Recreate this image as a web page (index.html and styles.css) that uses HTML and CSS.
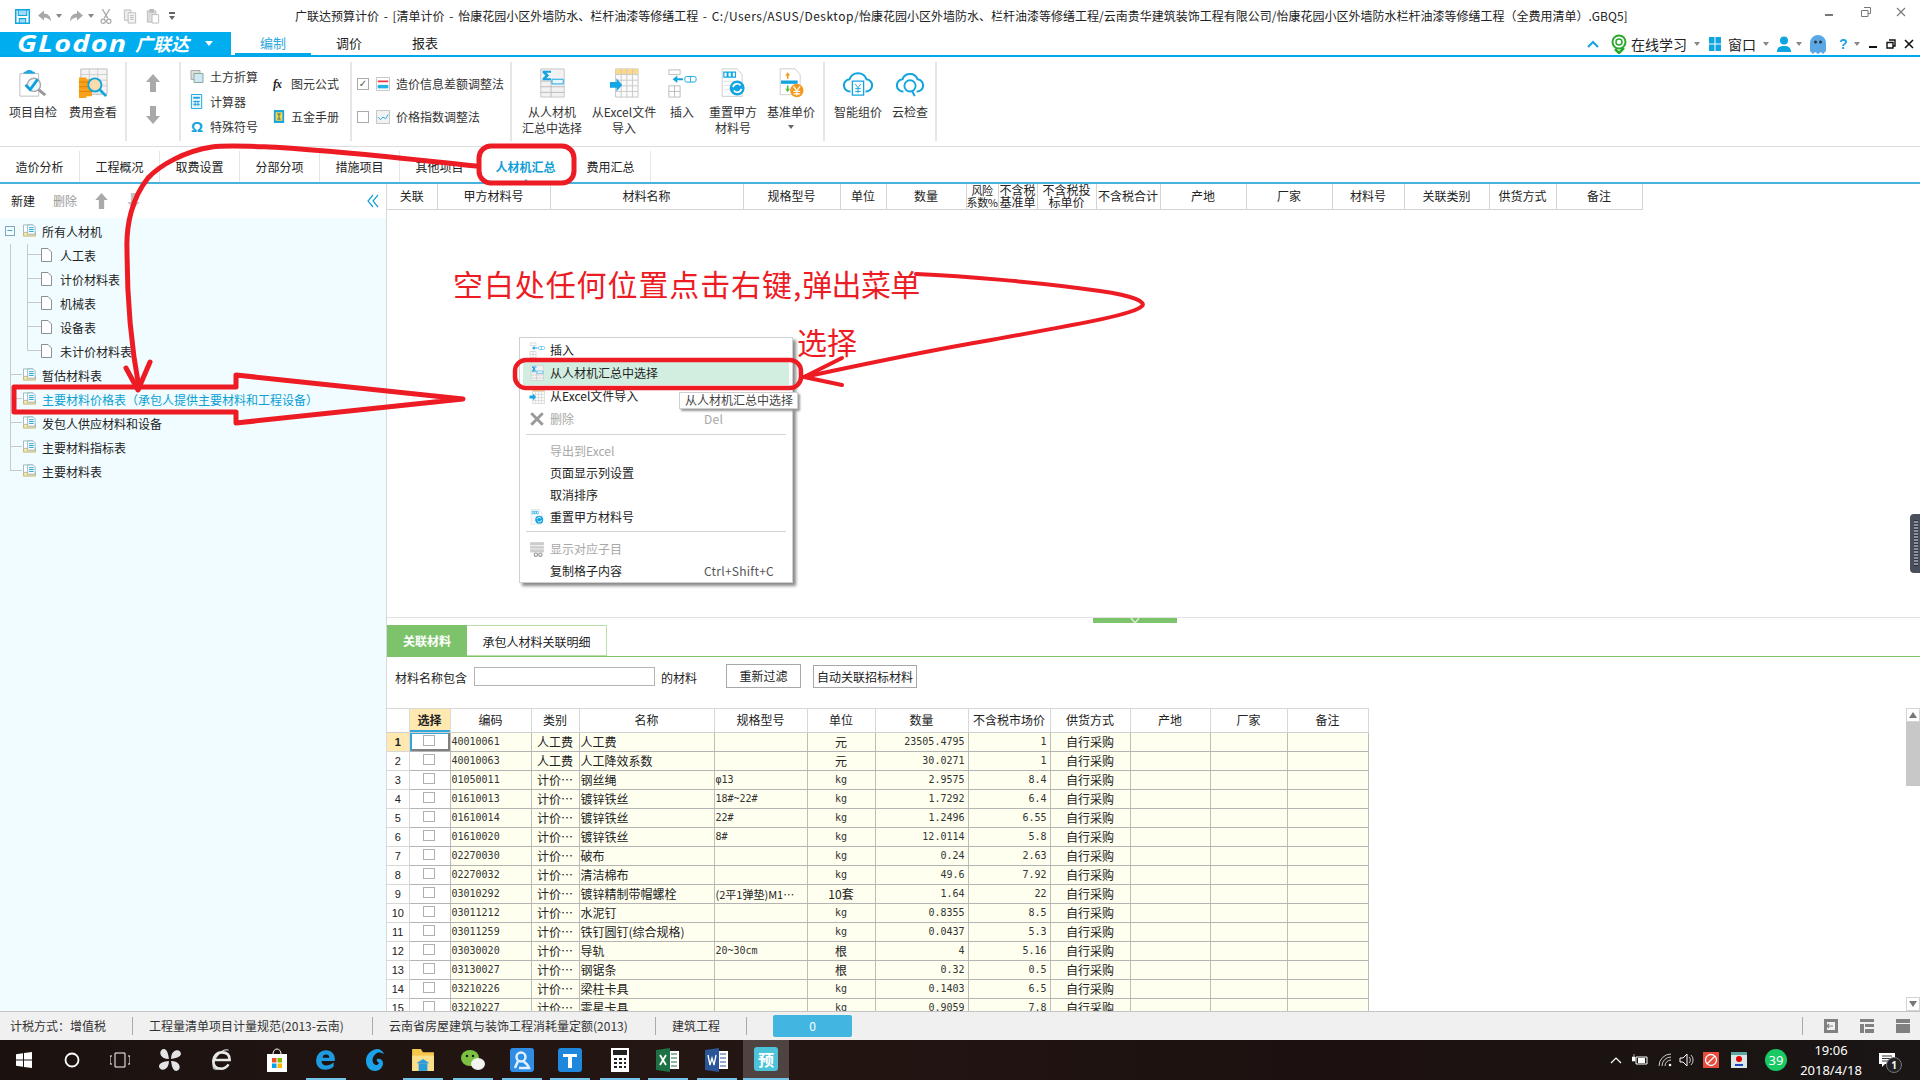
FILE: index.html
```html
<!DOCTYPE html>
<html lang="zh-CN">
<head>
<meta charset="utf-8">
<title>广联达预算计价</title>
<link rel="stylesheet" href="styles.css">
</head>
<body>
<svg class="defs" width="0" height="0" aria-hidden="true">
  <symbol id="i-check" viewBox="0 0 32 32">
    <path d="M2 6h20v24H2z" fill="#fff" stroke="#bbb"/><path d="M8 5a4 3 0 0 1 8 0z" fill="#1ba7e0"/><path d="M6 4h12v2H6z" fill="#1ba7e0"/>
    <circle cx="17" cy="18" r="7" fill="#eef7fb" stroke="#aaa" stroke-width="1.5"/><path d="M22 23l7 6" stroke="#999" stroke-width="3"/>
    <path d="M8 18l5 5 8-11" fill="none" stroke="#0aa0dc" stroke-width="3"/>
  </symbol>
  <symbol id="i-cost" viewBox="0 0 32 32">
    <path d="M3 1h28v27H3z" fill="#f4f4f4" stroke="#bbb"/><path d="M3 7h28M3 13h28M3 19h28M12 1v27M21 1v27" stroke="#ccc"/>
    <path d="M1 10h8v22H1zM8 12h7v18H8z" fill="#f9a11b"/><path d="M1 15h14M1 20h14M1 25h14" stroke="#e07f00"/>
    <circle cx="18" cy="18" r="7" fill="#f8dcae" stroke="#11a5dc" stroke-width="2"/><path d="M23 23l7 7" stroke="#11a5dc" stroke-width="3"/>
  </symbol>
  <symbol id="i-sum" viewBox="0 0 30 32">
    <path d="M3 1h25v30H3z" fill="#f2f2f2" stroke="#c4c4c4"/><path d="M3 14h25M3 20h25M3 26h25M14 14v17" stroke="#bbb"/>
    <path d="M5 3h9v2H9l3 3-3 3h5v2H5v-2l3-3-3-3z" fill="#14a3df"/><path d="M15 12h12v5H15z" fill="#e9f6fc" stroke="#14a3df"/>
  </symbol>
  <symbol id="i-excel" viewBox="0 0 32 32">
    <path d="M7 1h24v30H7z" fill="#fbfbfb" stroke="#c4c4c4"/><path d="M7 1h24v6H7z" fill="#fbd98a"/><path d="M7 7h24M7 13h24M7 19h24M7 25h24M13 1v30M19 1v30M25 1v30" stroke="#c9c9c9"/>
    <path d="M1 15h7v-4l6 7-6 7v-4H1z" fill="#12a5e3"/>
  </symbol>
  <symbol id="i-insert" viewBox="0 0 32 32">
    <path d="M2 2h12v5H2zM2 19h12v12H2z" fill="#fff" stroke="#bbb"/><path d="M2 25h12M8 19v12" stroke="#bbb"/>
    <path d="M6 12l5-4v3h6v2h-6v3z" fill="#12a5e3"/><rect x="19" y="9" width="12" height="6" rx="2" fill="#fff" stroke="#12a5e3"/><path d="M25 9v6" stroke="#12a5e3"/>
  </symbol>
  <symbol id="i-reset" viewBox="0 0 32 36">
    <path d="M3 1h18l6 7v26H3z" fill="#fff" stroke="#c4c4c4"/><path d="M5 5h4v6H5zM10 5h4v6h-4zM15 5h4v6h-4z" fill="#fff" stroke="#12a5e3" stroke-width="1.4"/><path d="M5 16h12M5 21h8M5 26h8" stroke="#ddd"/>
    <circle cx="21" cy="24" r="9" fill="#12a5e3"/><path d="M16 23a5 5 0 0 1 9-2M26 25a5 5 0 0 1-9 2" fill="none" stroke="#fff" stroke-width="2"/>
  </symbol>
  <symbol id="i-base" viewBox="0 0 32 36">
    <path d="M3 1h18l6 7v24H3z" fill="#fff" stroke="#c4c4c4"/><path d="M9 9l3-4 3 4h-2v4h-2V9z" fill="#f39a1e"/><path d="M4 15h20v4H4z" fill="#14a3df"/><path d="M11 21h2v4h2l-3 4-3-4h2z" fill="#5db84a"/>
    <circle cx="23" cy="27" r="8" fill="#f39a1e"/><path d="M19 22l4 5 4-5M23 27v6M19 28h8M19 31h8" fill="none" stroke="#fff" stroke-width="1.4"/>
  </symbol>
  <symbol id="i-cloudy" viewBox="0 0 32 32">
    <path d="M8 25a6.5 6.5 0 0 1-1-13 9.5 9.5 0 0 1 18 0 6.5 6.5 0 0 1-1 13" fill="none" stroke="#13a4df" stroke-width="2.2"/>
    <path d="M10 14h12v15H10z" fill="#fff" stroke="#13a4df" stroke-width="1.4"/><path d="M13 17l3 4 3-4M16 21v6M13 22h6M13 25h6" fill="none" stroke="#13a4df"/>
  </symbol>
  <symbol id="i-cloudq" viewBox="0 0 32 32">
    <path d="M9 25a6.5 6.5 0 0 1-1-13 8.5 8.5 0 0 1 16 0 6.5 6.5 0 0 1-1 13" fill="none" stroke="#13a4df" stroke-width="2.2"/>
    <circle cx="16" cy="19" r="6" fill="#fff" stroke="#13a4df" stroke-width="2"/><path d="M18 24l3 6" stroke="#13a4df" stroke-width="2.2"/>
  </symbol>
  <symbol id="i-folder" viewBox="0 0 14 14">
    <path d="M.5 1h10v11H.5z" fill="#fff" stroke="#9cb3b8"/><path d="M.5 9h13v4H.5z" fill="#f5e6ac" stroke="#c3b477"/><path d="M5 1h6l2 2v8H5z" fill="#fff" stroke="#8fb4bf"/><path d="M6.500 4h5M6.500 6h5M6.500 8h5" stroke="#14a3df"/>
  </symbol>
  <symbol id="i-page" viewBox="0 0 11 14"><path d="M.5.5h6.500l3.500 3.500v9.500H.5z" fill="#fff" stroke="#8a9093"/></symbol>
  <symbol id="i-up" viewBox="0 0 14 18"><path d="M7 0l7 8H10v10H4V8H0z" fill="#a9a9a9"/></symbol>
  <symbol id="i-down" viewBox="0 0 14 18"><path d="M7 18l7-8H10V0H4v10H0z" fill="#a9a9a9"/></symbol>
  <symbol id="i-win" viewBox="0 0 16 16"><path d="M0 2.200l7-1v6.300H0zM8 1l8-1v7.500H8zM0 8.500h7v6.300l-7-1zM8 8.500h8V16l-8-1z" fill="#fff"/></symbol>
</svg>

<div class="app">
  <header class="titlebar">
    <div class="qat">
      <svg class="q q-save" viewBox="0 0 14 14"><path d="M.7.7h12.600v12.600H.7z" fill="#fff" stroke="#0ea5e0" stroke-width="1.4"/><path d="M3 1h8v5H3zM4 9h6v4H4z" fill="#9edcf5" stroke="#0ea5e0"/></svg>
      <svg class="q q-undo" viewBox="0 0 14 14"><path d="M6 1L0 6l6 5V8c3 0 5 1 7 4 0-5-3-8-7-8z" fill="#a8a8a8"/></svg>
      <span class="caret-gray q-c1"></span>
      <svg class="q q-redo" viewBox="0 0 14 14"><path d="M8 1l6 5-6 5V8c-3 0-5 1-7 4 0-5 3-8 7-8z" fill="#a8a8a8"/></svg>
      <span class="caret-gray q-c2"></span>
      <svg class="q q-cut" viewBox="0 0 14 16"><path d="M3 0l6 10M11 0L5 10" stroke="#aaa" stroke-width="1.4"/><circle cx="4" cy="13" r="2.300" fill="none" stroke="#aaa" stroke-width="1.300"/><circle cx="10" cy="13" r="2.300" fill="none" stroke="#aaa" stroke-width="1.300"/></svg>
      <svg class="q q-copy" viewBox="0 0 14 16"><path d="M1 1h7v11H1z" fill="#eee" stroke="#bbb"/><path d="M5 4h8v11H5z" fill="#f4f4f4" stroke="#bbb"/><path d="M7 7h4M7 9h4M7 11h4" stroke="#bbb"/></svg>
      <svg class="q q-paste" viewBox="0 0 14 16"><path d="M1 2h9v12H1z" fill="#ddd" stroke="#bbb"/><path d="M3 0h5v4H3z" fill="#bbb"/><path d="M6 6h7v9H6z" fill="#fff" stroke="#bbb"/></svg>
      <svg class="q-menu" viewBox="0 0 6 8"><path d="M0 0h6v2H0zM0 4h6L3 8z" fill="#666"/></svg>
    </div>
    <div class="title-text">广联达预算计价 - [清单计价 - 怡康花园小区外墙防水、栏杆油漆等修缮工程 - <span class="lat">C:/Users/ASUS/Desktop/</span>怡康花园小区外墙防水、栏杆油漆等修缮工程/云南贵华建筑装饰工程有限公司/怡康花园小区外墙防水栏杆油漆等修缮工程（全费用清单）.GBQ5]</div>
    <div class="winctl">
      <span class="wc-min"></span>
      <svg class="wc-res" viewBox="0 0 10 10"><path d="M3 .5h6.500v6H7M.5 3.500H7v6H.5z" fill="#fff" stroke="#777"/></svg>
      <svg class="wc-x" viewBox="0 0 10 10"><path d="M1 1l8 8M9 1l-8 8" stroke="#777" stroke-width="1.100"/></svg>
    </div>
  </header>

  <nav class="menubar">
    <div class="logo"><span class="logo-en"><span class="logo-stretch">GLodon</span></span><span class="logo-cn">广联达</span><span class="caret-white"></span></div>
    <a class="mtab active">编制</a><a class="mtab">调价</a><a class="mtab">报表</a>
    <div class="mright">
      <svg class="m-upc" viewBox="0 0 12 8"><path d="M1 7l5-5 5 5" fill="none" stroke="#1aa7e0" stroke-width="2.200"/></svg>
      <svg class="m-learn" viewBox="0 0 16 20"><circle cx="8" cy="8" r="6.500" fill="none" stroke="#2aa82a" stroke-width="2"/><circle cx="8" cy="8" r="3" fill="#fff" stroke="#2aa82a" stroke-width="1.500"/><path d="M4 15l4 4 5-5" fill="none" stroke="#2aa82a" stroke-width="2.500"/></svg>
      <span class="m-learn-text">在线学习</span>
      <span class="caret-gray m-c1"></span>
      <svg class="m-grid" viewBox="0 0 12 14"><path d="M0 0h5.500v6.500H0zM6.500 0H12v6.500H6.500zM0 7.500h5.500V14H0zM6.500 7.500H12V14H6.500z" fill="#0ea5e0"/></svg>
      <span class="m-win-text">窗口</span>
      <span class="caret-gray m-c2"></span>
      <svg class="m-user" viewBox="0 0 14 16"><circle cx="7" cy="4.500" r="4" fill="#0ea5e0"/><path d="M0 16c0-5 3-6 7-6s7 1 7 6z" fill="#0ea5e0"/></svg>
      <span class="caret-gray m-c3"></span>
      <svg class="m-ghost" viewBox="0 0 16 20"><path d="M0 9a8 8 0 0 1 16 0v8l-3 3-2-2-3 2-3-2-2 2-3-3z" fill="#5aa9e6"/><circle cx="5.500" cy="8" r="1.500" fill="#333"/><circle cx="10.500" cy="8" r="1.500" fill="#333"/></svg>
      <span class="m-help">?</span>
      <span class="caret-gray m-c4"></span>
      <span class="m-min"></span>
      <svg class="m-res" viewBox="0 0 10 10"><path d="M3 1h6v6H7M1 3.500h6v5.500H1z" fill="#fff" stroke="#111" stroke-width="1.400"/></svg>
      <svg class="m-x" viewBox="0 0 10 10"><path d="M1 1l8 8M9 1l-8 8" stroke="#111" stroke-width="1.600"/></svg>
    </div>
  </nav>

  <section class="ribbon">
    <div class="rgroup g1">
      <div class="rbtn w60"><svg class="ric"><use href="#i-check"/></svg><span>项目自检</span></div>
      <div class="rbtn w60"><svg class="ric"><use href="#i-cost"/></svg><span>费用查看</span></div>
    </div>
    <div class="rgroup g2">
      <svg class="arrow-b"><use href="#i-up"/></svg>
      <svg class="arrow-b"><use href="#i-down"/></svg>
    </div>
    <div class="rgroup g3">
      <div class="smallcol three">
        <div class="srow"><svg class="sic" viewBox="0 0 14 14"><path d="M1 1h9v9H1z" fill="#ddd" stroke="#aaa"/><path d="M4 4h9v9H4z" fill="#cfe8f5" stroke="#8a9"/></svg>土方折算</div>
        <div class="srow"><svg class="sic" viewBox="0 0 14 16"><path d="M1 .5h11v15H1z" fill="#e8f6fd" stroke="#14a3df"/><path d="M3 3h7v2H3z" fill="#14a3df"/><path d="M3 8h7M3 11h7M5 7v6M8 7v6" stroke="#14a3df"/></svg>计算器</div>
        <div class="srow"><span class="omega">Ω</span>特殊符号</div>
      </div>
      <div class="smallcol two">
        <div class="srow"><span class="fx"><i>f</i><i>x</i></span>图元公式</div>
        <div class="srow"><svg class="sic12" viewBox="0 0 14 16"><path d="M1 .5h12v15H1z" fill="#14a3df"/><path d="M3 3h8v10H3z" fill="#f9d648"/><path d="M5 5h4M7 5v6M5 11h4" stroke="#14638a"/></svg>五金手册</div>
      </div>
    </div>
    <div class="rgroup g4">
      <div class="smallcol two">
        <div class="srow"><span class="cb checked">✓</span><svg class="sic2" viewBox="0 0 16 16"><path d="M.5.5h15v15H.5z" fill="#fff" stroke="#bbb"/><path d="M2 4h12v2H2z" fill="#e63946"/><path d="M2 9h12v4H2z" fill="#21b0e8"/></svg>造价信息差额调整法</div>
        <div class="srow"><span class="cb"></span><svg class="sic2" viewBox="0 0 16 16"><path d="M.5.5h15v15H.5z" fill="#f2f2f2" stroke="#bbb"/><path d="M2 8l3 3 3-3 3 2 3-5" fill="none" stroke="#14a3df"/></svg>价格指数调整法</div>
      </div>
    </div>
    <div class="rgroup g5">
      <div class="rbtn w80"><svg class="ric"><use href="#i-sum"/></svg><span>从人材机<br>汇总中选择</span></div>
      <div class="rbtn w64"><svg class="ric"><use href="#i-excel"/></svg><span>从Excel文件<br>导入</span></div>
      <div class="rbtn w52"><svg class="ric"><use href="#i-insert"/></svg><span>插入</span></div>
      <div class="rbtn w50"><svg class="ric"><use href="#i-reset"/></svg><span>重置甲方<br>材料号</span></div>
      <div class="rbtn w66"><svg class="ric"><use href="#i-base"/></svg><span>基准单价</span><span class="caret-small"></span></div>
    </div>
    <div class="rgroup g6">
      <div class="rbtn w52"><svg class="ric"><use href="#i-cloudy"/></svg><span>智能组价</span></div>
      <div class="rbtn w52"><svg class="ric"><use href="#i-cloudq"/></svg><span>云检查</span></div>
    </div>
  </section>

  <nav class="tabs">
    <a class="tab">造价分析</a><a class="tab">工程概况</a><a class="tab">取费设置</a><a class="tab">分部分项</a><a class="tab">措施项目</a><a class="tab">其他项目</a><a class="tab wide active">人材机汇总</a><a class="tab">费用汇总</a>
  </nav>

  <main class="main">
    <aside class="side">
      <div class="side-tools">
        <span class="st-new">新建</span><span class="st-del">删除</span>
        <svg class="st-up"><use href="#i-up"/></svg><svg class="st-down"><use href="#i-down"/></svg>
        <svg class="st-coll" viewBox="0 0 12 14"><path d="M6 1L1 7l5 6M11 1L6 7l5 6" fill="none" stroke="#1aa0d8" stroke-width="1.200"/></svg>
      </div>
      <ul class="tree">
        <li class="node root"><span class="exp">−</span><svg class="nic"><use href="#i-folder"/></svg>所有人材机</li>
        <li class="node leaf"><svg class="pic"><use href="#i-page"/></svg>人工表</li>
        <li class="node leaf"><svg class="pic"><use href="#i-page"/></svg>计价材料表</li>
        <li class="node leaf"><svg class="pic"><use href="#i-page"/></svg>机械表</li>
        <li class="node leaf"><svg class="pic"><use href="#i-page"/></svg>设备表</li>
        <li class="node leaf last"><svg class="pic"><use href="#i-page"/></svg>未计价材料表</li>
        <li class="node top"><svg class="nic"><use href="#i-folder"/></svg>暂估材料表</li>
        <li class="node top sel"><svg class="nic"><use href="#i-folder"/></svg>主要材料价格表（承包人提供主要材料和工程设备）</li>
        <li class="node top"><svg class="nic"><use href="#i-folder"/></svg>发包人供应材料和设备</li>
        <li class="node top"><svg class="nic"><use href="#i-folder"/></svg>主要材料指标表</li>
        <li class="node top end"><svg class="nic"><use href="#i-folder"/></svg>主要材料表</li>
      </ul>
    </aside>

    <div class="content">
      <section class="upper">
        <table class="head-table">
          <colgroup><col class="u1"><col class="u2"><col class="u3"><col class="u4"><col class="u5"><col class="u6"><col class="u7"><col class="u8"><col class="u9"><col class="u10"><col class="u11"><col class="u12"><col class="u13"><col class="u14"><col class="u15"><col class="u16"></colgroup>
          <tr><th>关联</th><th>甲方材料号</th><th>材料名称</th><th>规格型号</th><th>单位</th><th>数量</th><th class="tight narrow">风险<br>系数%</th><th class="tight">不含税<br>基准单</th><th class="tight">不含税投<br>标单价</th><th>不含税合计</th><th>产地</th><th>厂家</th><th>材料号</th><th>关联类别</th><th>供货方式</th><th>备注</th></tr>
        </table>
      </section>
      <div class="splitter"><span class="handle"><svg viewBox="0 0 10 6" class="handle-ic"><path d="M1 0l4 5 4-5" fill="none" stroke="#dff3d8" stroke-width="1.300"/></svg></span></div>
      <section class="lower">
        <div class="ltabs"><a class="ltab on">关联材料</a><a class="ltab">承包人材料关联明细</a></div>
        <div class="filter">
          <span>材料名称包含</span><span class="finput"></span><span class="fl-suffix">的材料</span>
          <button class="fbtn b1">重新过滤</button><button class="fbtn b2">自动关联招标材料</button>
        </div>
        <div class="grid-wrap">
          <div class="grid-clip">
            <table class="grid">
              <colgroup><col class="n0"><col class="n1"><col class="n2"><col class="n3"><col class="n4"><col class="n5"><col class="n6"><col class="n7"><col class="n8"><col class="n9"><col class="n10"><col class="n11"><col class="n12"></colgroup>
              <thead><tr><th></th><th class="cursor">选择</th><th>编码</th><th>类别</th><th>名称</th><th>规格型号</th><th>单位</th><th>数量</th><th>不含税市场价</th><th>供货方式</th><th>产地</th><th>厂家</th><th>备注</th></tr></thead>
              <tbody>
                <tr><td class="rn cur">1</td><td class="ck focus"><span class="box"></span></td><td class="m">40010061</td><td class="c">人工费</td><td>人工费</td><td class="m"></td><td class="c">元</td><td class="m r">23505.4795</td><td class="m r">1</td><td class="c">自行采购</td><td></td><td></td><td></td></tr>
                <tr><td class="rn">2</td><td class="ck"><span class="box"></span></td><td class="m">40010063</td><td class="c">人工费</td><td>人工降效系数</td><td class="m"></td><td class="c">元</td><td class="m r">30.0271</td><td class="m r">1</td><td class="c">自行采购</td><td></td><td></td><td></td></tr>
                <tr><td class="rn">3</td><td class="ck"><span class="box"></span></td><td class="m">01050011</td><td class="c">计价⋯</td><td>钢丝绳</td><td class="m">φ13</td><td class="c m">kg</td><td class="m r">2.9575</td><td class="m r">8.4</td><td class="c">自行采购</td><td></td><td></td><td></td></tr>
                <tr><td class="rn">4</td><td class="ck"><span class="box"></span></td><td class="m">01610013</td><td class="c">计价⋯</td><td>镀锌铁丝</td><td class="m">18#~22#</td><td class="c m">kg</td><td class="m r">1.7292</td><td class="m r">6.4</td><td class="c">自行采购</td><td></td><td></td><td></td></tr>
                <tr><td class="rn">5</td><td class="ck"><span class="box"></span></td><td class="m">01610014</td><td class="c">计价⋯</td><td>镀锌铁丝</td><td class="m">22#</td><td class="c m">kg</td><td class="m r">1.2496</td><td class="m r">6.55</td><td class="c">自行采购</td><td></td><td></td><td></td></tr>
                <tr><td class="rn">6</td><td class="ck"><span class="box"></span></td><td class="m">01610020</td><td class="c">计价⋯</td><td>镀锌铁丝</td><td class="m">8#</td><td class="c m">kg</td><td class="m r">12.0114</td><td class="m r">5.8</td><td class="c">自行采购</td><td></td><td></td><td></td></tr>
                <tr><td class="rn">7</td><td class="ck"><span class="box"></span></td><td class="m">02270030</td><td class="c">计价⋯</td><td>破布</td><td class="m"></td><td class="c m">kg</td><td class="m r">0.24</td><td class="m r">2.63</td><td class="c">自行采购</td><td></td><td></td><td></td></tr>
                <tr><td class="rn">8</td><td class="ck"><span class="box"></span></td><td class="m">02270032</td><td class="c">计价⋯</td><td>清洁棉布</td><td class="m"></td><td class="c m">kg</td><td class="m r">49.6</td><td class="m r">7.92</td><td class="c">自行采购</td><td></td><td></td><td></td></tr>
                <tr><td class="rn">9</td><td class="ck"><span class="box"></span></td><td class="m">03010292</td><td class="c">计价⋯</td><td>镀锌精制带帽螺栓</td><td class="spec">(2平1弹垫)M1⋯</td><td class="c">10套</td><td class="m r">1.64</td><td class="m r">22</td><td class="c">自行采购</td><td></td><td></td><td></td></tr>
                <tr><td class="rn">10</td><td class="ck"><span class="box"></span></td><td class="m">03011212</td><td class="c">计价⋯</td><td>水泥钉</td><td class="m"></td><td class="c m">kg</td><td class="m r">0.8355</td><td class="m r">8.5</td><td class="c">自行采购</td><td></td><td></td><td></td></tr>
                <tr><td class="rn">11</td><td class="ck"><span class="box"></span></td><td class="m">03011259</td><td class="c">计价⋯</td><td>铁钉圆钉(综合规格)</td><td class="m"></td><td class="c m">kg</td><td class="m r">0.0437</td><td class="m r">5.3</td><td class="c">自行采购</td><td></td><td></td><td></td></tr>
                <tr><td class="rn">12</td><td class="ck"><span class="box"></span></td><td class="m">03030020</td><td class="c">计价⋯</td><td>导轨</td><td class="m">20~30cm</td><td class="c">根</td><td class="m r">4</td><td class="m r">5.16</td><td class="c">自行采购</td><td></td><td></td><td></td></tr>
                <tr><td class="rn">13</td><td class="ck"><span class="box"></span></td><td class="m">03130027</td><td class="c">计价⋯</td><td>钢锯条</td><td class="m"></td><td class="c">根</td><td class="m r">0.32</td><td class="m r">0.5</td><td class="c">自行采购</td><td></td><td></td><td></td></tr>
                <tr><td class="rn">14</td><td class="ck"><span class="box"></span></td><td class="m">03210226</td><td class="c">计价⋯</td><td>梁柱卡具</td><td class="m"></td><td class="c m">kg</td><td class="m r">0.1403</td><td class="m r">6.5</td><td class="c">自行采购</td><td></td><td></td><td></td></tr>
                <tr><td class="rn">15</td><td class="ck"><span class="box"></span></td><td class="m">03210227</td><td class="c">计价⋯</td><td>零星卡具</td><td class="m"></td><td class="c m">kg</td><td class="m r">0.9059</td><td class="m r">7.8</td><td class="c">自行采购</td><td></td><td></td><td></td></tr>
              </tbody>
            </table>
          </div>
          <div class="vscroll">
            <span class="vs-btn"><span class="tri-up"></span></span>
            <span class="vs-thumb"></span>
            <span class="vs-track"></span>
            <span class="vs-btn"><span class="tri-down"></span></span>
          </div>
        </div>
      </section>
    </div>
  </main>

  <footer class="status">
    <span class="s1">计税方式：增值税</span>
    <span class="s2">工程量清单项目计量规范(2013-云南)</span>
    <span class="s3">云南省房屋建筑与装饰工程消耗量定额(2013)</span>
    <span class="s4">建筑工程</span>
    <span class="s-blue">0</span>
    <div class="s-right">
      <svg class="si" viewBox="0 0 14 14"><path d="M0 0h14v14H0z" fill="#808080"/><path d="M3 3h8v8H3z" fill="#f0f0f0"/><path d="M3 7h6M3 7l2-2M3 7l2 2" stroke="#808080" stroke-width="1.200"/></svg>
      <svg class="si" viewBox="0 0 14 14"><path d="M0 0h14v3H0zM0 5h4v9H0zM5 5h9v3H5zM5 10h9v4H5z" fill="#808080"/></svg>
      <svg class="si" viewBox="0 0 14 14"><path d="M0 0h14v4H0zM0 5h14v9H0z" fill="#808080"/></svg>
    </div>
  </footer>

  <div class="taskbar">
    <svg class="tb t-win"><use href="#i-win"/></svg>
    <svg class="tb t-cort" viewBox="0 0 16 16"><circle cx="8" cy="8" r="6.500" fill="none" stroke="#fff" stroke-width="1.800"/></svg>
    <svg class="tb t-view" viewBox="0 0 20 16"><path d="M5 1h10v14H5zM2 4H0v8h2M18 4h2v8h-2" fill="none" stroke="#fff"/></svg>
    <span class="slot m28"><svg class="t-ic" viewBox="0 0 22 22"><path d="M10 10C2 10 1 4 3 2s6-2 7 8zM12 10c0-8 6-9 8-7s2 6-8 7zM12 12c8 0 9 6 7 8s-6 2-7-8zM10 12c0 8-6 9-8 7s-2-6 8-7z" fill="#e4e4e4"/></svg></span>
    <span class="slot m28"><svg class="t-ic" viewBox="0 0 22 22"><path d="M4 11h14c0-5-3-7-7-7-5 0-8 4-8 8 0 5 3 7 7 7 3 0 5-1 7-4" fill="none" stroke="#e8e8e8" stroke-width="2.400"/><path d="M17 2C13 0 2 8 3 18c1 2 4 2 7 0" fill="none" stroke="#e8e8e8"/></svg></span>
    <span class="slot m31"><svg class="t-ic" viewBox="0 0 22 24"><path d="M1 6h20v18H1z" fill="#fff"/><path d="M7 6a4 5 0 0 1 8 0" fill="none" stroke="#fff"/><path d="M6 10h4.500v4.500H6z" fill="#f25022"/><path d="M11.500 10H16v4.500h-4.500z" fill="#7fba00"/><path d="M6 15.500h4.500V20H6z" fill="#00a4ef"/><path d="M11.500 15.500H16V20h-4.500z" fill="#ffb900"/></svg></span>
    <span class="slot m25 run"><svg class="t-ic" viewBox="0 0 22 22"><path d="M2 12h17c1-6-3-10-8-10-6 0-9 5-9 10s4 8 8 8c3 0 6-1 8-3v-4c-2 2-5 3-7 3-3 0-4-2-4-4z" fill="#1e9be0"/><path d="M8 9c0-2 1-3 3-3s3 1 3 3z" fill="#1a1412"/></svg></span>
    <span class="slot m25"><svg class="t-ic" viewBox="0 0 22 24"><path d="M13 1C6 2 2 7 2 13s4 10 9 10 8-4 8-8c0-3-3-5-6-4-1 2 1 3 2 4-1 2-3 3-5 1-3-3-1-9 3-11 2-1 5 0 7 1-1-3-4-5-7-5z" fill="#1aa3e8"/></svg></span>
    <span class="slot m24 run"><svg class="t-ic" viewBox="0 0 22 22"><path d="M1 1h8l2 3h10v17H1z" fill="#f5c84c"/><path d="M1 7h20v14H1z" fill="#fbe08c"/><path d="M7 14h8v7H7z" fill="#2a9bdc"/><path d="M5 14h12l-6-4z" fill="#2a9bdc"/></svg></span>
    <span class="slot m26 run"><svg class="t-ic" viewBox="0 0 24 22"><ellipse cx="9" cy="9" rx="9" ry="8" fill="#7bc242"/><ellipse cx="17" cy="15" rx="7" ry="6" fill="#f2f2f2"/><circle cx="6" cy="7" r="1.200" fill="#1a1412"/><circle cx="12" cy="7" r="1.200" fill="#1a1412"/></svg></span>
    <span class="slot m25 run"><svg class="t-ic" viewBox="0 0 24 24"><rect width="24" height="24" rx="3" fill="#2f8de4"/><circle cx="11" cy="9" r="4.500" fill="none" stroke="#dff0ff" stroke-width="2.500"/><path d="M8 13l-3 7M13 13c3 2 5 4 6 7H9" fill="none" stroke="#dff0ff" stroke-width="2.500"/></svg></span>
    <span class="slot m24 run"><svg class="t-ic" viewBox="0 0 24 24"><rect width="24" height="24" rx="3" fill="#1f87dc"/><path d="M5 6h14v3h-5v11h-4V9H5z" fill="#fff"/></svg></span>
    <span class="slot m26 run"><svg class="t-ic" viewBox="0 0 18 24"><path d="M0 0h18v24H0z" fill="#fff"/><path d="M2 2h14v5H2z" fill="#222"/><path d="M3 10h3v2H3zM8 10h3v2H8zM13 10h2v2h-2zM3 14h3v2H3zM8 14h3v2H8zM13 14h2v2h-2zM3 18h3v2H3zM8 18h3v2H8zM13 18h2v2h-2z" fill="#222"/></svg></span>
    <span class="slot m24 run"><svg class="t-ic" viewBox="0 0 24 24"><path d="M13 3h10v18H13z" fill="#fff"/><path d="M15 6h6M15 10h6M15 14h6M15 18h6" stroke="#1d7145"/><path d="M0 2l14-2v24L0 22z" fill="#1d7145"/><path d="M4 7l6 10M10 7l-6 10" stroke="#fff" stroke-width="1.800"/></svg></span>
    <span class="slot m25 run"><svg class="t-ic" viewBox="0 0 24 24"><path d="M13 3h10v18H13z" fill="#fff"/><path d="M15 6h6M15 10h6M15 14h6M15 18h6" stroke="#2a5699"/><path d="M0 2l14-2v24L0 22z" fill="#2a5699"/><path d="M3 7l2 10 2-7 2 7 2-10" fill="none" stroke="#fff" stroke-width="1.300"/></svg></span>
    <span class="t-active"><span class="t-yu">预</span></span>
    <div class="tray">
      <svg class="ty-caret" viewBox="0 0 12 8"><path d="M1 7l5-5 5 5" fill="none" stroke="#fff" stroke-width="1.200"/></svg>
      <svg class="ty-bat" viewBox="0 0 16 12"><path d="M4 3h11v7H4z" fill="none" stroke="#fff"/><path d="M6 4h7v5H6z" fill="#fff"/><path d="M2 0v3M0 3h3v4H0z" fill="#fff" stroke="#fff" stroke-width=".6"/></svg>
      <svg class="ty-wifi" viewBox="0 0 14 14"><path d="M1 13a12 12 0 0 1 12-12M4 13a9 9 0 0 1 9-9M7 13a6 6 0 0 1 6-6" fill="none" stroke="#ccc"/><circle cx="12" cy="12" r="1.300" fill="#fff"/></svg>
      <svg class="ty-snd" viewBox="0 0 16 14"><path d="M1 5h3l4-4v12l-4-4H1z" fill="none" stroke="#fff"/><path d="M10 4a4 4 0 0 1 0 6M12 2a7 7 0 0 1 0 10" fill="none" stroke="#ccc"/></svg>
      <svg class="ty-red" viewBox="0 0 16 16"><path d="M0 0h16v16H0z" fill="#e74c3c"/><circle cx="8" cy="8" r="5.500" fill="none" stroke="#fff" stroke-width="1.300"/><path d="M4 12l8-8" stroke="#fff" stroke-width="1.300"/></svg>
      <svg class="ty-app" viewBox="0 0 16 16"><path d="M0 0h16v16H0z" fill="#d8e8e6"/><path d="M0 0h16v3H0z" fill="#5fa79e"/><circle cx="8" cy="7" r="3" fill="#e00000"/><path d="M4 12h8v2H4z" fill="#1a46c8"/></svg>
      <span class="ty-num">39</span>
      <div class="clock"><span>19:06</span><span>2018/4/18</span></div>
      <span class="notif"><svg viewBox="0 0 16 14" class="notif-ic"><path d="M0 0h16v11H6l-3 3v-3H0z" fill="#fff"/><path d="M3 3h10M3 5.500h10M3 8h8" stroke="#333"/></svg><span class="notif-b">1</span></span>
    </div>
  </div>

  <div class="ctx">
    <div class="ci up1"><svg class="cic"><use href="#i-insert"/></svg>插入</div>
    <div class="ci up1 hot"><svg class="cic"><use href="#i-sum"/></svg>从人材机汇总中选择</div>
    <div class="ci up1"><svg class="cic"><use href="#i-excel"/></svg>从Excel文件导入</div>
    <div class="ci up1 off"><svg class="cic" viewBox="0 0 14 14"><path d="M2 2l10 10M12 2L2 12" stroke="#999" stroke-width="2.500"/></svg>删除<span class="sc">Del</span></div>
    <div class="csep"></div>
    <div class="ci c2 off"><span class="cic"></span>导出到Excel</div>
    <div class="ci c2"><span class="cic"></span>页面显示列设置</div>
    <div class="ci c2"><span class="cic"></span>取消排序</div>
    <div class="ci c2"><svg class="cic"><use href="#i-reset"/></svg>重置甲方材料号</div>
    <div class="csep s2b"></div>
    <div class="ci c2 off"><svg class="cic" viewBox="0 0 14 14"><path d="M1 1h12v9H1z" fill="#ccc"/><path d="M1 4h12M1 7h12" stroke="#eee"/><circle cx="6" cy="12" r="1.500" fill="none" stroke="#999"/><circle cx="10" cy="12" r="1.500" fill="none" stroke="#999"/></svg>显示对应子目</div>
    <div class="ci c2"><span class="cic"></span>复制格子内容<span class="sc">Ctrl+Shift+C</span></div>
  </div>
  <div class="tooltip">从人材机汇总中选择</div>

  <div class="side-widget"><span class="sw-bars"></span></div>

  <svg class="ink" viewBox="0 0 1920 1080" fill="none" stroke="#ed1c24" stroke-linecap="round" stroke-linejoin="round">
    <rect x="479" y="146" width="95" height="37" rx="12" stroke-width="5"/>
    <path d="M476 166C400 158 330 150 269 147C245 146 225 145 212 147C185 151 160 165 148 178C132 198 126 225 127 250C127 300 131 345 139 388" stroke-width="5"/>
    <path d="M126 368L138 390L150 362" stroke-width="5"/>
    <path d="M14 387H236V375L463 399L236 423V412H14Z" stroke-width="5"/>
    <rect x="515" y="360" width="286" height="28" rx="11" stroke-width="4.500"/>
    <path d="M916 274C960 276 1040 282 1100 291C1135 296 1146 302 1142 306C1135 314 1090 322 991 340C920 352 860 365 804 377" stroke-width="4"/>
    <path d="M842 358L804 377L842 385" stroke-width="4"/>
  </svg>
  <div class="note n-a">空白处任何位置点击右键,<span class="n-tail">弹出菜单</span></div>
  <div class="note n-b">选择</div>
</div>
</body>
</html>
```

FILE: styles.css
```css
* { box-sizing: border-box; }
html, body { margin: 0; padding: 0; }
body { width: 1920px; height: 1080px; overflow: hidden; background: #fff; font: 12px/16px "Noto Sans CJK SC", "Noto Sans", sans-serif; color: #222; }
.defs { position: absolute; width: 0; height: 0; }
.app { position: relative; display: flex; flex-direction: column; width: 1920px; height: 1080px; }
a { display: block; }
ul { list-style: none; margin: 0; padding: 0; }

/* title bar */
.titlebar { flex: 0 0 32px; display: flex; align-items: center; }
.qat { width: 295px; display: flex; align-items: center; padding-left: 15px; flex: none; }
.q { display: block; height: 15px; }
.q-save { width: 15px; }
.q-undo { width: 14px; margin-left: 8px; }
.q-c1 { margin-left: 4px; }
.q-redo { width: 14px; margin-left: 7px; }
.q-c2 { margin-left: 5px; }
.q-cut { width: 14px; margin-left: 5px; }
.q-copy { width: 14px; margin-left: 10px; }
.q-paste { width: 14px; margin-left: 9px; }
.q-menu { width: 6px; height: 8px; margin-left: 9px; }
.caret-gray { display: block; width: 0; height: 0; border: 3px solid transparent; border-top: 4px solid #888; border-bottom: 0; flex: none; }
.title-text { white-space: nowrap; color: #222; word-spacing: 2px; }
.lat { letter-spacing: .5px; }
.winctl { margin-left: auto; display: flex; align-items: center; padding-right: 14px; margin-top: -8px; }
.wc-min { width: 8px; height: 2px; background: #777; margin-top: 6px; }
.wc-res { width: 10px; height: 10px; margin-left: 28px; }
.wc-x { width: 10px; height: 10px; margin-left: 25px; }

/* menu bar */
.menubar { flex: 0 0 25px; height: 25px; display: flex; border-bottom: 2px solid #00a8ea; }
.logo { width: 231px; height: 23px; background: #00aeef; color: #fff; display: flex; align-items: center; padding-left: 17px; flex: none; overflow: visible; }
.logo-en { width: 117px; flex: none; }
.logo-stretch { display: inline-block; font: italic 700 23px/23px "Open Sans", sans-serif; letter-spacing: 1px; white-space: nowrap; transform: scaleX(1.25); transform-origin: left center; }
.logo-cn { font: italic 700 18px/23px "Noto Sans CJK SC", sans-serif; width: 62px; margin-left: 1px; white-space: nowrap; }
.caret-white { width: 0; height: 0; border: 4px solid transparent; border-top: 5px solid #fff; border-bottom: 0; margin-left: 8px; }
.mtab { width: 76px; text-align: center; font-size: 13px; line-height: 22px; height: 23px; color: #222; }
.mtab:first-of-type { margin-left: 4px; border-bottom: 2px solid #00a8ea; color: #2aa7dc; }
.mright { margin-left: auto; display: flex; align-items: center; padding-right: 6px; height: 23px; }
.m-upc { width: 12px; height: 8px; }
.m-learn { width: 16px; height: 20px; margin-left: 12px; }
.m-learn-text { font-size: 14px; width: 56px; margin-left: 4px; white-space: nowrap; }
.m-c1 { margin-left: 7px; }
.m-grid { width: 12px; height: 14px; margin-left: 9px; }
.m-win-text { font-size: 14px; width: 28px; margin-left: 7px; white-space: nowrap; }
.m-c2 { margin-left: 7px; }
.m-user { width: 14px; height: 16px; margin-left: 8px; }
.m-c3 { margin-left: 5px; }
.m-ghost { width: 16px; height: 20px; margin-left: 8px; }
.m-help { width: 8px; margin-left: 13px; color: #0ea5e0; font: 700 14px/16px "Liberation Sans", sans-serif; }
.m-c4 { margin-left: 7px; }
.m-min { width: 8px; height: 2px; background: #111; margin-left: 9px; margin-top: 7px; }
.m-res { width: 10px; height: 10px; margin-left: 9px; }
.m-x { width: 10px; height: 10px; margin-left: 8px; }

/* ribbon */
.ribbon { flex: 0 0 90px; display: flex; padding: 5px 0; border-bottom: 1px solid #dedede; }
.rgroup { display: flex; border-right: 2px solid #e6e6e6; height: 79px; flex: none; }
.g1 { width: 127px; padding-left: 3px; }
.g2 { width: 54px; flex-direction: column; align-items: center; padding: 12px 0 0; }
.g3 { width: 171px; padding-left: 9px; }
.g4 { width: 160px; padding-left: 5px; }
.g5 { width: 313px; }
.g6 { width: 112px; padding-left: 7px; border-right: 2px solid #e6e6e6; }
.rbtn { display: flex; flex-direction: column; align-items: center; padding-top: 6px; text-align: center; color: #333; white-space: nowrap; flex: none; }
.w60 { width: 60px; } .w80 { width: 80px; } .w64 { width: 64px; } .w52 { width: 52px; } .w50 { width: 50px; } .w66 { width: 66px; }
.ric { width: 30px; height: 30px; margin-bottom: 6px; }
.arrow-b { width: 14px; height: 18px; margin-bottom: 14px; }
.caret-small { width: 0; height: 0; border: 3px solid transparent; border-top: 4px solid #666; border-bottom: 0; margin-top: 5px; }
.smallcol { display: flex; flex-direction: column; color: #333; white-space: nowrap; }
.smallcol.three { width: 83px; padding-top: 2px; }
.smallcol.two { padding-top: 5px; }
.three .srow { height: 25px; }
.two .srow { height: 33px; }
.srow { display: flex; align-items: center; }
.sic { width: 14px; height: 15px; margin-right: 6px; flex: none; }
.sic12 { width: 12px; height: 15px; margin-right: 6px; flex: none; }
.sic2 { width: 14px; height: 14px; margin: 0 6px 0 7px; flex: none; }
.omega { width: 14px; margin-right: 6px; color: #14a3df; font: 700 15px/16px "Liberation Sans", sans-serif; text-align: center; }
.fx { width: 12px; margin-right: 6px; font: italic 700 12px/14px "Liberation Serif", serif; color: #222; white-space: nowrap; }
.fx i { letter-spacing: -1px; }
.cb { width: 12px; height: 12px; border: 1px solid #aaa; background: #fff; font: 10px/10px "DejaVu Sans", sans-serif; text-align: center; color: #555; flex: none; }

/* page tabs */
.tabs { flex: 0 0 37px; display: flex; border-bottom: 2px solid #47b3dd; padding-top: 4px; }
.tab { width: 80px; text-align: center; line-height: 31px; border-right: 1px solid #e6e6e6; color: #222; flex: none; position: relative; }
.tab.wide { width: 91px; border-right: 0; }
.tab.active { color: #12a0d8; font-weight: 700; }
.tab.active::after { content: ""; position: absolute; left: 43px; bottom: 0; border: 3px solid transparent; border-bottom: 3px solid #47b3dd; border-top: 0; }

/* main */
.main { flex: 0 0 827px; display: flex; min-height: 0; }
.side { width: 387px; flex: none; display: flex; flex-direction: column; border-right: 1px solid #d9d9d9; }
.side-tools { flex: 0 0 34px; display: flex; align-items: center; padding: 0 7px 0 11px; }
.st-new { width: 42px; }
.st-del { width: 42px; color: #999; }
.st-up, .st-down { width: 13px; height: 16px; }
.st-down { margin-left: 19px; opacity: .7; }
.st-coll { width: 12px; height: 14px; margin-left: auto; }
.tree { flex: 1; background: #f0fcff; padding-top: 2px; }
.node { height: 24px; display: flex; align-items: center; white-space: nowrap; padding-left: 23px; color: #222; background-repeat: no-repeat; }
.nic { width: 13px; height: 13px; margin-right: 6px; margin-top: -3px; }
.pic { width: 11px; height: 14px; margin-right: 8px; margin-top: -3px; flex: none; }
.exp { position: absolute; left: 5px; width: 10px; height: 10px; border: 1px solid #7ba9c2; font: 10px/7px "Liberation Sans", sans-serif; color: #1a93c4; text-align: center; margin-top: -2px; }
.leaf { padding-left: 41px; background-image: linear-gradient(#c9c9c9, #c9c9c9), linear-gradient(#c9c9c9, #c9c9c9), linear-gradient(#c9c9c9, #c9c9c9); background-size: 1px 100%, 1px 100%, 13px 1px; background-position: 10px 0, 27px 0, 28px 10px; }
.leaf.last { background-size: 1px 100%, 1px 11px, 13px 1px; }
.top { background-image: linear-gradient(#c9c9c9, #c9c9c9), linear-gradient(#c9c9c9, #c9c9c9); background-size: 1px 100%, 12px 1px; background-position: 10px 0, 10px 10px; }
.top.end { background-size: 1px 11px, 12px 1px; }
.sel { color: #0aa0d2; }

.content { flex: 1; min-width: 0; display: flex; flex-direction: column; }
.upper { flex: 0 0 433px; }
.head-table { table-layout: fixed; width: 1255px; border-collapse: collapse; }
.head-table th { height: 25px; font-weight: 400; padding: 0; border-right: 1px solid #d4d4d4; border-bottom: 1px solid #d4d4d4; color: #222; text-align: center; white-space: nowrap; line-height: 16px; }
.head-table .tight { line-height: 12px; }
.head-table .narrow { font-size: 11px; letter-spacing: -.4px; }
.u1 { width: 50px; } .u2 { width: 113px; } .u3 { width: 193px; } .u4 { width: 97px; } .u5 { width: 46px; } .u6 { width: 80px; } .u7 { width: 32px; } .u8 { width: 39px; } .u9 { width: 59px; } .u10 { width: 64px; } .u11 { width: 86px; } .u12 { width: 86px; } .u13 { width: 72px; } .u14 { width: 85px; } .u15 { width: 67px; } .u16 { width: 86px; }

.splitter { flex: 0 0 8px; border-top: 1px solid #e2e2e2; }
.handle { display: flex; justify-content: center; width: 84px; height: 5px; margin-left: 706px; background: #7dc36b; }
.handle-ic { width: 10px; height: 6px; }

.lower { flex: 1; min-height: 0; display: flex; flex-direction: column; }
.ltabs { flex: 0 0 31px; display: flex; border-bottom: 1px solid #7dc36b; }
.ltab { height: 31px; line-height: 31px; text-align: center; }
.ltab.on { width: 80px; background: #7dc36b; color: #fff; font-weight: 700; }
.ltab:not(.on) { width: 140px; border: 1px solid #b9dfaa; border-left: 0; color: #222; line-height: 32px; }
.filter { flex: 0 0 51px; height: 51px; display: flex; align-items: flex-start; padding: 7px 0 0 8px; }
.filter > span { line-height: 28px; white-space: nowrap; }
.finput { width: 181px; height: 19px; margin: 3px 0 0 7px; border: 1px solid #b5b5b5; background: #fff; }
.fl-suffix { margin-left: 6px; width: 36px; }
.fbtn { font: inherit; color: #222; background: #fff; border: 1px solid #a8a8a8; padding: 0; height: 24px; white-space: nowrap; }
.b1 { width: 75px; margin-left: 29px; }
.b2 { width: 104px; margin: 1px 0 0 12px; height: 23px; }

.grid-wrap { flex: 1; min-height: 0; display: flex; }
.grid-clip { flex: 1; min-width: 0; overflow: hidden; }
.grid { table-layout: fixed; width: 981px; border-collapse: collapse; }
.grid th { height: 24px; padding: 0 0 2px; font-weight: 400; border-right: 1px solid #d8d8d8; border-top: 1px solid #d8d8d8; border-bottom: 1px solid #d0d0d0; text-align: center; background: #fff; }
.grid th.cursor { background: #ffe9b0; font-weight: 700; box-shadow: inset 0 -2px #35a6d8; }
.grid td { height: 19px; padding: 0 0 0 1px; background: #feffef; border-right: 1px solid #bdbdbd; border-bottom: 1px solid #b4b4b4; overflow: hidden; white-space: nowrap; line-height: 18px; }
.grid .c { text-align: center; padding: 0; }
.grid .r { text-align: right; padding: 0 3px 0 0; }
.grid .m { font: 10px/18px "DejaVu Sans Mono", monospace; color: #333; }
.grid .spec { font-size: 11px; }
.grid .rn { background: #fff; text-align: center; padding: 0; font: 11px/18px "Liberation Sans", sans-serif; border-color: #d8d8d8; }
.grid .rn.cur { background: #ffe9b0; font-weight: 700; }
.grid .ck { background: #fff; text-align: center; padding: 0 2px 0 0; }
.grid .focus { box-shadow: inset 2px 0 #35a6d8, inset -2px -2px #808080, inset 0 1px #35a6d8; }
.box { display: inline-block; width: 12px; height: 11px; border: 1px solid #b0b0b0; background: #fff; vertical-align: 1px; }
.n0 { width: 22px; } .n1 { width: 41px; } .n2 { width: 81px; } .n3 { width: 48px; } .n4 { width: 135px; } .n5 { width: 93px; } .n6 { width: 68px; } .n7 { width: 93px; } .n8 { width: 82px; } .n9 { width: 80px; } .n10 { width: 80px; } .n11 { width: 77px; } .n12 { width: 81px; }

.vscroll { width: 14px; flex: none; display: flex; flex-direction: column; background: #fff; }
.vs-btn { flex: 0 0 14px; display: flex; align-items: center; justify-content: center; border: 1px solid #d4d4d4; background: #fff; }
.vs-thumb { flex: 0 0 64px; background: #c8c8c8; }
.vs-track { flex: 1; background: #fff; }
.tri-up, .tri-down { width: 0; height: 0; border: 4px solid transparent; }
.tri-up { border-bottom: 6px solid #777; border-top: 0; }
.tri-down { border-top: 6px solid #777; border-bottom: 0; }

/* status */
.status { flex: 0 0 29px; display: flex; align-items: center; background: #f0f0f0; border-top: 1px solid #c4c4c4; color: #333; white-space: nowrap; }
.status > span:not(.s-blue) { display: flex; align-items: center; height: 18px; border-right: 1px solid #aaa; }
.s1 { width: 133px; padding-left: 10px; }
.s2 { width: 240px; padding-left: 16px; }
.s3 { width: 283px; padding-left: 16px; }
.s4 { width: 91px; padding-left: 16px; }
.s-blue { width: 79px; height: 22px; margin-left: 26px; background: #42b6e0; color: #fff; text-align: center; line-height: 22px; border-radius: 2px; }
.s-right { margin-left: auto; display: flex; align-items: center; gap: 22px; height: 18px; padding: 0 10px 0 21px; border-left: 1px solid #aaa; }
.si { width: 14px; height: 14px; display: block; }

/* taskbar */
.taskbar { flex: 0 0 40px; display: flex; align-items: center; position: relative; background: linear-gradient(90deg, #1b1210, #241612 35%, #1c1110 70%, #1a1615); }
.tb { flex: none; display: block; }
.t-win { width: 16px; height: 16px; margin-left: 16px; }
.t-cort { width: 16px; height: 16px; margin-left: 32px; }
.t-view { width: 20px; height: 16px; margin-left: 30px; }
.slot { position: relative; display: block; width: 24px; height: 24px; flex: none; }
.m24 { margin-left: 24px; } .m25 { margin-left: 25px; } .m26 { margin-left: 26px; } .m28 { margin-left: 28px; } .m31 { margin-left: 31px; }
.t-ic { display: block; width: 24px; height: 24px; }
.run::after { content: ""; position: absolute; left: -8px; right: -8px; top: 30px; height: 2px; background: #74c3ea; }
.t-active { flex: none; width: 46px; height: 40px; margin-left: 14px; background: rgba(255,255,255,.2); display: flex; align-items: center; justify-content: center; border-bottom: 2px solid #74c3ea; }
.t-yu { width: 24px; height: 24px; background: #4cc3d9; color: #fff; border-radius: 3px; text-align: center; font: 700 16px/24px "Noto Sans CJK SC", sans-serif; }
.tray { margin-left: auto; display: flex; align-items: center; color: #fff; padding-right: 25px; }
.ty-caret { width: 12px; height: 8px; }
.ty-bat { width: 16px; height: 12px; margin-left: 10px; }
.ty-wifi { width: 14px; height: 14px; margin-left: 10px; }
.ty-snd { width: 16px; height: 14px; margin-left: 7px; }
.ty-red { width: 16px; height: 16px; margin-left: 8px; }
.ty-app { width: 16px; height: 16px; margin-left: 12px; }
.ty-num { width: 22px; height: 22px; margin-left: 18px; border-radius: 50%; background: #18c964; color: #fff; font: 13px/22px "Noto Sans", sans-serif; text-align: center; }
.clock { display: flex; flex-direction: column; align-items: center; width: 62px; margin-left: 13px; font: 13px/20px "Noto Sans", sans-serif; }
.notif { position: relative; display: block; width: 16px; height: 14px; margin-left: 17px; }
.notif-ic { width: 16px; height: 14px; display: block; }
.notif-b { position: absolute; left: 7px; top: 4px; width: 16px; height: 16px; border-radius: 50%; background: #222; border: 1px solid #777; color: #fff; font: 700 10px/14px "Noto Sans", sans-serif; text-align: center; }

/* context menu */
.ctx { position: absolute; left: 519px; top: 337px; width: 274px; height: 246px; padding: 1px; background: #fff; border: 1px solid #d0d0d0; box-shadow: 3px 3px 3px #8a8a8a; display: flex; flex-direction: column; }
.ci { flex: 0 0 23px; display: flex; align-items: center; padding-left: 8px; position: relative; color: #222; }
.ci.up1 { padding-bottom: 2px; }
.ci.c2 { flex-basis: 22px; }
.ci.off { color: #a8a8a8; }
.ci.hot { background: #d2eee0; margin: 0 2px; padding-left: 6px; }
.cic { width: 16px; height: 16px; margin-right: 5px; flex: none; display: block; }
.sc { position: absolute; left: 183px; color: #555; letter-spacing: .25px; }
.ci.off .sc { color: #a8a8a8; }
.csep { flex: 0 0 1px; margin: 3px 5px 5px; background: #d4d4d4; }
.csep.s2b { margin: 3px 5px 6px; }
.tooltip { position: absolute; left: 679px; top: 392px; height: 17px; width: 119px; line-height: 14px; padding-left: 5px; background: #fff; border: 1px solid #d0d0d0; box-shadow: 2px 2px 2px #999; color: #444; white-space: nowrap; }

.side-widget { position: absolute; right: 0; top: 514px; width: 10px; height: 59px; background: #4a4f5c; border-radius: 4px 0 0 4px; padding: 6px 0 0 4px; }
.sw-bars { display: block; width: 4px; height: 46px; background: repeating-linear-gradient(#2f333c 0 1px, #8d93a0 1px 3px); }

/* annotation layer */
.ink { position: absolute; left: 0; top: 0; width: 1920px; height: 1080px; pointer-events: none; }
.note { position: absolute; color: #ed1c24; white-space: nowrap; }
.n-a { left: 453px; top: 262px; font-size: 30px; line-height: 42px; letter-spacing: .9px; }
.n-tail { letter-spacing: -.6px; }
.n-b { left: 797px; top: 320px; font-size: 30px; line-height: 42px; }
```
